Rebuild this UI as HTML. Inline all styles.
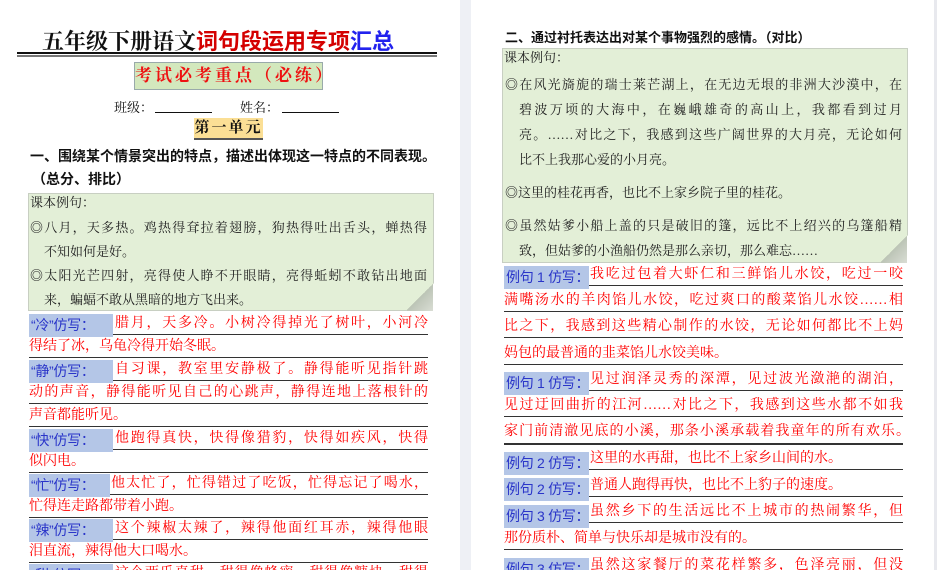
<!DOCTYPE html>
<html><head><meta charset="utf-8"><style>
*{margin:0;padding:0;box-sizing:border-box}
html,body{width:937px;height:570px;overflow:hidden}
body{background:#fff;position:relative;font-family:"Liberation Serif","Noto Serif CJK SC",serif}
.gap{position:absolute;top:0;left:460px;width:11px;height:570px;background:#eef0f5}
.gap2{position:absolute;top:0;left:934px;width:3px;height:570px;background:#e8e9ee}
.a{position:absolute;white-space:nowrap}
.j{text-align-last:justify;text-align:justify}
.box{position:absolute;background:#e3efd7;border:1px solid #c8cfc2;clip-path:polygon(0 0,100% 0,100% calc(100% - 28px),calc(100% - 24px) 100%,0 100%)}
.fold{position:absolute;width:26px;height:28px;background:linear-gradient(135deg,transparent 50%,#bcc4b6 50%,#d9ddd4 100%)}
.bt{font-size:13px;color:#222;height:24px;line-height:24px}
.r{position:absolute;height:22px;line-height:22px;font-size:14px;color:#f00;border-bottom:1.5px solid #333;white-space:nowrap}
.lb{position:absolute;background:#b4c6e7;color:#2a35c9;font-family:"Liberation Sans","Noto Sans CJK SC",sans-serif;font-size:14px;height:23px;line-height:23px;padding-left:2px;white-space:nowrap;overflow:hidden;letter-spacing:-0.3px}
.t{position:absolute;height:22px;line-height:22px;font-size:14px;color:#f00;white-space:nowrap;text-align-last:justify;text-align:justify}
</style></head><body>
<div class="gap"></div><div class="gap2"></div>

<div class="a" style="left:42px;top:24px;font-size:22px;font-weight:bold;font-family:'Liberation Serif','Noto Serif CJK SC',serif;color:#111">五年级下册语文<span style="color:#d40000;font-family:'Liberation Sans','Noto Sans CJK SC',sans-serif">词句段运用专项</span><span style="color:#2222ee;font-family:'Liberation Sans','Noto Sans CJK SC',sans-serif">汇总</span></div>
<div class="a" style="left:17px;top:52px;width:420px;height:2px;background:#111"></div>
<div class="a" style="left:17px;top:55px;width:420px;height:2px;background:#777"></div>
<div class="a" style="left:134px;top:62px;width:189px;height:28px;background:#d3e8bd;border:1px solid #9aa;color:#ee1111;font-size:17px;line-height:26px;text-align:center;letter-spacing:3px;font-weight:bold">考试必考重点（必练）</div>
<div class="a" style="left:114px;top:97px;font-size:13px;color:#111">班级：</div>
<div class="a" style="left:155px;top:112px;width:57px;height:1px;background:#111"></div>
<div class="a" style="left:240px;top:97px;font-size:13px;color:#111">姓名：</div>
<div class="a" style="left:282px;top:112px;width:57px;height:1px;background:#111"></div>
<div class="a" style="left:194px;top:118px;width:69px;height:22px;background:#fbdf95;border-bottom:2px solid #555;font-size:15px;line-height:21px;text-align:center;letter-spacing:2px;color:#111;font-weight:bold">第一单元</div>
<div class="a" style="left:30px;top:146px;font-size:14px;font-weight:bold;font-family:'Liberation Sans','Noto Sans CJK SC',sans-serif;color:#111">一、围绕某个情景突出的特点，描述出体现这一特点的不同表现。</div>
<div class="a" style="left:32px;top:169px;font-size:14px;font-weight:bold;font-family:'Liberation Sans','Noto Sans CJK SC',sans-serif;color:#111">（总分、排比）</div>

<div class="box" style="left:28px;top:193px;width:406px;height:118px"></div>
<div class="fold" style="left:407px;top:283px"></div>
<div class="a bt" style="left:30px;top:191px">课本例句：</div>
<div class="a bt j" style="left:30px;top:216px;width:397px">◎八月，天多热。鸡热得耷拉着翅膀，狗热得吐出舌头，蝉热得</div>
<div class="a bt" style="left:44px;top:240px">不知如何是好。</div>
<div class="a bt j" style="left:30px;top:264px;width:397px">◎太阳光芒四射，亮得使人睁不开眼睛，亮得蚯蚓不敢钻出地面</div>
<div class="a bt" style="left:44px;top:288px">来，蝙蝠不敢从黑暗的地方飞出来。</div>

<div class="r" style="left:29px;top:313px;width:399px"></div><div class="lb" style="left:29px;top:314px;width:84px">“冷”仿写：</div><div class="t" style="left:115px;top:313px;width:313px">腊月，天多冷。小树冷得掉光了树叶，小河冷</div>
<div class="r" style="left:29px;top:336px;width:399px">得结了冰，乌龟冷得开始冬眠。</div>
<div class="r" style="left:29px;top:359px;width:399px"></div><div class="lb" style="left:29px;top:360px;width:84px">“静”仿写：</div><div class="t" style="left:115px;top:359px;width:313px">自习课，教室里安静极了。静得能听见指针跳</div>
<div class="r j" style="left:29px;top:382px;width:399px">动的声音，静得能听见自己的心跳声，静得连地上落根针的</div>
<div class="r" style="left:29px;top:405px;width:399px">声音都能听见。</div>
<div class="r" style="left:29px;top:428px;width:399px"></div><div class="lb" style="left:29px;top:429px;width:84px">“快”仿写：</div><div class="t" style="left:115px;top:428px;width:313px">他跑得真快，快得像猎豹，快得如疾风，快得</div>
<div class="r" style="left:29px;top:451px;width:399px">似闪电。</div>
<div class="r" style="left:29px;top:473px;width:399px"></div><div class="lb" style="left:29px;top:474px;width:81px">“忙”仿写：</div><div class="t" style="left:111px;top:473px;width:317px">他太忙了，忙得错过了吃饭，忙得忘记了喝水，</div>
<div class="r" style="left:29px;top:496px;width:399px">忙得连走路都带着小跑。</div>
<div class="r" style="left:29px;top:518px;width:399px"></div><div class="lb" style="left:29px;top:519px;width:84px">“辣”仿写：</div><div class="t" style="left:115px;top:518px;width:313px">这个辣椒太辣了，辣得他面红耳赤，辣得他眼</div>
<div class="r" style="left:29px;top:541px;width:399px">泪直流，辣得他大口喝水。</div>
<div class="lb" style="left:29px;top:564px;width:84px">“甜”仿写：</div><div class="t" style="left:115px;top:563px;width:313px">这个西瓜真甜，甜得像蜂蜜，甜得像糖块，甜得</div>

<div class="a" style="left:505px;top:27px;font-size:13px;font-weight:bold;font-family:'Liberation Sans','Noto Sans CJK SC',sans-serif;color:#111">二、通过衬托表达出对某个事物强烈的感情。（对比）</div>
<div class="box" style="left:502px;top:48px;width:406px;height:215px"></div>
<div class="fold" style="left:881px;top:235px"></div>
<div class="a bt" style="left:504px;top:46px">课本例句：</div>
<div class="a bt j" style="left:505px;top:73px;width:397px">◎在风光旖旎的瑞士莱芒湖上，在无边无垠的非洲大沙漠中，在</div>
<div class="a bt j" style="left:519px;top:98px;width:383px">碧波万顷的大海中，在巍峨雄奇的高山上，我都看到过月</div>
<div class="a bt j" style="left:519px;top:123px;width:383px">亮。……对比之下，我感到这些广阔世界的大月亮，无论如何</div>
<div class="a bt" style="left:519px;top:148px">比不上我那心爱的小月亮。</div>
<div class="a bt" style="left:505px;top:181px">◎这里的桂花再香，也比不上家乡院子里的桂花。</div>
<div class="a bt j" style="left:505px;top:214px;width:397px">◎虽然姑爹小船上盖的只是破旧的篷，远比不上绍兴的乌篷船精</div>
<div class="a bt" style="left:519px;top:239px">致，但姑爹的小渔船仍然是那么亲切，那么难忘……</div>

<div class="r" style="left:504px;top:264px;width:399px"></div><div class="lb" style="left:504px;top:266px;width:85px">例句 1 仿写：</div><div class="t" style="left:590px;top:264px;width:313px">我吃过包着大虾仁和三鲜馅儿水饺，吃过一咬</div>
<div class="r j" style="left:504px;top:290px;width:399px">满嘴汤水的羊肉馅儿水饺，吃过爽口的酸菜馅儿水饺……相</div>
<div class="r j" style="left:504px;top:316px;width:399px">比之下，我感到这些精心制作的水饺，无论如何都比不上妈</div>
<div class="r" style="left:504px;top:343px;width:399px">妈包的最普通的韭菜馅儿水饺美味。</div>
<div class="r" style="left:504px;top:369px;width:399px"></div><div class="lb" style="left:504px;top:372px;width:85px">例句 1 仿写：</div><div class="t" style="left:590px;top:369px;width:313px">见过润泽灵秀的深潭，见过波光潋滟的湖泊，</div>
<div class="r j" style="left:504px;top:395px;width:399px">见过迂回曲折的江河……对比之下，我感到这些水都不如我</div>
<div class="r j" style="left:504px;top:421px;width:406px;border:none">家门前清澈见底的小溪，那条小溪承载着我童年的所有欢乐。</div>
<div class="a" style="left:504px;top:443px;width:399px;height:1.5px;background:#333"></div>
<div class="r" style="left:504px;top:448px;width:399px"></div><div class="lb" style="left:504px;top:452px;width:85px">例句 2 仿写：</div><div class="t" style="left:590px;top:448px;text-align-last:auto">这里的水再甜，也比不上家乡山间的水。</div>
<div class="r" style="left:504px;top:475px;width:399px"></div><div class="lb" style="left:504px;top:478px;width:85px">例句 2 仿写：</div><div class="t" style="left:590px;top:475px;text-align-last:auto">普通人跑得再快，也比不上豹子的速度。</div>
<div class="r" style="left:504px;top:501px;width:399px"></div><div class="lb" style="left:504px;top:505px;width:85px">例句 3 仿写：</div><div class="t" style="left:590px;top:501px;width:313px">虽然乡下的生活远比不上城市的热闹繁华，但</div>
<div class="r" style="left:504px;top:528px;width:399px">那份质朴、简单与快乐却是城市没有的。</div>
<div class="lb" style="left:504px;top:558px;width:85px">例句 3 仿写：</div><div class="t" style="left:590px;top:555px;width:313px">虽然这家餐厅的菜花样繁多，色泽亮丽，但没</div>
</body></html>
